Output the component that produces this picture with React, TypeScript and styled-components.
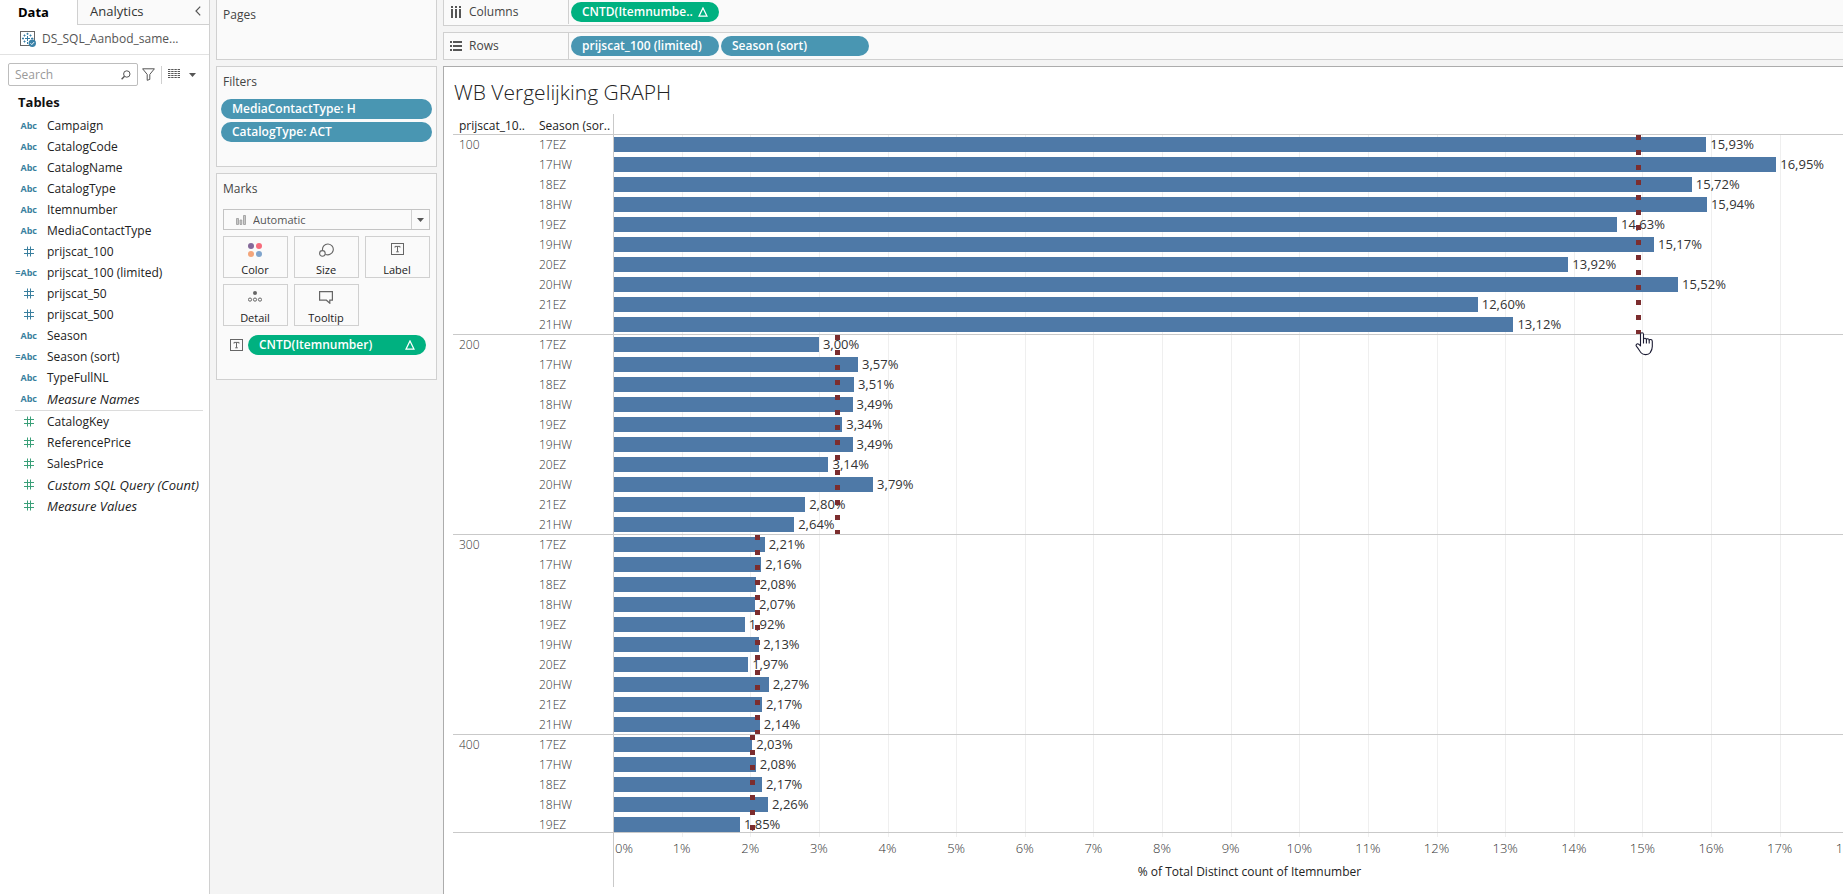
import React from "react";
import styled, { createGlobalStyle } from "styled-components";

/* ---------- data ---------- */

type FieldKind = "text" | "calc" | "number";
interface Field {
  name: string;
  kind: FieldKind;
  generated?: boolean;
}

const dimensions: Field[] = [
  { name: "Campaign", kind: "text" },
  { name: "CatalogCode", kind: "text" },
  { name: "CatalogName", kind: "text" },
  { name: "CatalogType", kind: "text" },
  { name: "Itemnumber", kind: "text" },
  { name: "MediaContactType", kind: "text" },
  { name: "prijscat_100", kind: "number" },
  { name: "prijscat_100 (limited)", kind: "calc" },
  { name: "prijscat_50", kind: "number" },
  { name: "prijscat_500", kind: "number" },
  { name: "Season", kind: "text" },
  { name: "Season (sort)", kind: "calc" },
  { name: "TypeFullNL", kind: "text" },
  { name: "Measure Names", kind: "text", generated: true },
];

const measures: Field[] = [
  { name: "CatalogKey", kind: "number" },
  { name: "ReferencePrice", kind: "number" },
  { name: "SalesPrice", kind: "number" },
  { name: "Custom SQL Query (Count)", kind: "number", generated: true },
  { name: "Measure Values", kind: "number", generated: true },
];

const seasons = ["17EZ", "17HW", "18EZ", "18HW", "19EZ", "19HW", "20EZ", "20HW", "21EZ", "21HW"];

interface Group {
  label: string;
  average: number;
  values: number[];
}

const groups: Group[] = [
  { label: "100", average: 14.94, values: [15.93, 16.95, 15.72, 15.94, 14.63, 15.17, 13.92, 15.52, 12.6, 13.12] },
  { label: "200", average: 3.27, values: [3.0, 3.57, 3.51, 3.49, 3.34, 3.49, 3.14, 3.79, 2.8, 2.64] },
  { label: "300", average: 2.1, values: [2.21, 2.16, 2.08, 2.07, 1.92, 2.13, 1.97, 2.27, 2.17, 2.14] },
  { label: "400", average: 2.02, values: [2.03, 2.08, 2.17, 2.26, 1.85] },
];

const AXIS_MAX = 18.52;
const ticks = Array.from({ length: 19 }, (_, i) => i);
/* Zero lies on the 1px axis line, just left of the plot's content box. */
const toPlot = (value: number) => `calc(${(value / AXIS_MAX) * 100}% - 1px)`;
const format = (value: number) => `${value.toFixed(2).replace(".", ",")}%`;

/* ---------- shared ---------- */

const color = {
  line: "#d0d0d0",
  card: "#fafafa",
  canvas: "#f4f4f4",
  dimension: "#4996b2",
  measure: "#00b180",
  bar: "#4e79a7",
  chartLine: "#c9c9c9",
};

const GlobalStyle = createGlobalStyle`
  *, *::before, *::after { box-sizing: border-box; }
  body {
    margin: 0;
    font: 12px/16px "Open Sans", "Noto Sans", sans-serif;
    color: #222;
    background: ${color.canvas};
    overflow: hidden;
  }
  button, input, select { font: inherit; color: inherit; }
  button { border: 0; padding: 0; background: none; cursor: pointer; }
  ul { margin: 0; padding: 0; list-style: none; }
  svg { display: block; flex: none; }
`;

const Page = styled.div`
  display: grid;
  grid-template-columns: 210px 221px minmax(0, 1fr);
  column-gap: 6px;
  min-height: 100vh;
`;

const Pill = styled.button<{ $tone: "dimension" | "measure" }>`
  display: flex;
  align-items: center;
  justify-content: space-between;
  height: 20px;
  padding: 0 11px;
  border-radius: 10px;
  background: ${(p) => color[p.$tone]};
  color: #fff;
  font-weight: 600;
  line-height: 20px;
  white-space: nowrap;
`;

/* ---------- data pane ---------- */

const DataPane = styled.aside`
  background: #fff;
  border-right: 1px solid ${color.line};
`;

const Tabs = styled.div`
  display: grid;
  grid-template-columns: 77px 1fr;
  height: 25px;
`;

const Tab = styled.button<{ $active?: boolean }>`
  display: flex;
  align-items: center;
  justify-content: space-between;
  padding: 0 8px 2px ${(p) => (p.$active ? 18 : 12)}px;
  font-size: 13px;
  font-weight: ${(p) => (p.$active ? 700 : 400)};
  color: ${(p) => (p.$active ? "#000" : "#333")};
  background: ${(p) => (p.$active ? "#fff" : color.card)};
  border: 0 solid ${color.line};
  border-width: ${(p) => (p.$active ? "0" : "0 0 1px 1px")};
`;

const Source = styled.button`
  display: flex;
  align-items: center;
  gap: 6px;
  width: 100%;
  height: 30px;
  padding: 0 20px 2px;
  color: #555;
  border-bottom: 1px solid #e2e2e2;
`;

const SearchRow = styled.div`
  display: flex;
  align-items: center;
  gap: 4px;
  padding: 8px 12px 0 8px;
`;

const SearchBox = styled.label`
  display: flex;
  align-items: center;
  width: 130px;
  height: 23px;
  padding: 0 6px;
  border: 1px solid #bdbdbd;
  border-radius: 2px;
`;

const SearchInput = styled.input`
  flex: 1;
  min-width: 0;
  padding: 0;
  border: 0;
  outline: 0;
  background: none;
  &::placeholder { color: #999; opacity: 1; }
`;

const ToolDivider = styled.span`
  width: 1px;
  height: 18px;
  margin: 0 2px;
  background: ${color.line};
`;

const ViewButton = styled.button`
  display: flex;
  align-items: center;
  gap: 9px;
`;

const TablesHeading = styled.h2`
  margin: 6px 0 3px;
  padding-left: 18px;
  font-size: 13px;
  line-height: 20px;
  font-weight: 700;
  color: #111;
`;

const FieldList = styled.ul`
  & + & {
    position: relative;
    margin-top: 1px;
    padding-top: 1px;
  }
  & + &::before {
    content: "";
    position: absolute;
    top: 0;
    left: 15px;
    right: 6px;
    height: 1px;
    background: #dcdcdc;
  }
`;

const FieldItem = styled.li<{ $generated?: boolean }>`
  display: grid;
  grid-template-columns: 38px 1fr;
  column-gap: 9px;
  align-items: center;
  height: 21px;
  white-space: nowrap;
  font-size: ${(p) => (p.$generated ? 13 : 12)}px;
  font-style: ${(p) => (p.$generated ? "italic" : "normal")};
`;

const FieldIcon = styled.span<{ $number: boolean; $measure: boolean }>`
  justify-self: end;
  padding-right: ${(p) => (p.$number ? 4 : 1)}px;
  font-size: 9px;
  font-style: normal;
  font-weight: 700;
  color: ${(p) => (p.$measure ? "#3a9f78" : "#3a7f9e")};
`;

/* ---------- cards ---------- */

const Cards = styled.section`
  display: flex;
  flex-direction: column;
  gap: 6px;
`;

const Card = styled.section<{ $cut?: boolean; $bottom: number }>`
  padding: 0 4px ${(p) => p.$bottom}px;
  background: ${color.card};
  border: 1px solid ${color.line};
  border-top-width: ${(p) => (p.$cut ? 0 : 1)}px;
`;

const CardTitle = styled.h2`
  margin: 0;
  padding-left: 2px;
  font-size: 12px;
  line-height: 29px;
  font-weight: 400;
  color: #444;
`;

const PillStack = styled.div`
  display: grid;
  gap: 3px;
  padding-top: 3px;
`;

const MarksBody = styled.div`
  display: grid;
  gap: 6px;
  padding: 6px 2px 0;
`;

const MarkType = styled.label`
  display: flex;
  align-items: center;
  height: 21px;
  border: 1px solid #c4c4c4;
  background: ${color.card};
  padding-left: 12px;
  gap: 7px;
`;

const MarkSelect = styled.select`
  appearance: none;
  flex: 1;
  align-self: stretch;
  padding: 0;
  border: 0;
  outline: 0;
  background: none;
  font-size: 11px;
  color: #555;
`;

const MarkArrow = styled.span`
  display: grid;
  place-items: center;
  align-self: stretch;
  width: 18px;
  margin-left: -7px;
  border-left: 1px solid ${color.line};
`;

const MarkGrid = styled.div`
  display: grid;
  grid-template-columns: repeat(3, 65px);
  gap: 6px;
`;

const MarkButton = styled.button`
  display: flex;
  flex-direction: column;
  align-items: center;
  justify-content: space-between;
  height: 42px;
  padding: 6px 1px 0 0;
  border: 1px solid ${color.line};
  font-size: 11px;
  line-height: 15px;
`;

const EncodedField = styled.div`
  display: grid;
  grid-template-columns: 13px 1fr;
  column-gap: 5px;
  align-items: center;
  padding: 3px 4px 0 7px;
`;

/* ---------- shelves and sheet ---------- */

const Workspace = styled.main`
  display: flex;
  flex-direction: column;
  gap: 6px;
  min-width: 0;
  overflow: hidden;
`;

const Shelf = styled.section<{ $cut?: boolean }>`
  display: flex;
  height: ${(p) => (p.$cut ? 26 : 28)}px;
  padding-bottom: ${(p) => (p.$cut ? 1 : 0)}px;
  background: ${color.card};
  border: 1px solid ${color.line};
  border-width: ${(p) => (p.$cut ? "0 0 1px 1px" : "1px 0 1px 1px")};
`;

const ShelfName = styled.h2`
  display: flex;
  align-items: center;
  gap: 7px;
  width: 125px;
  margin: 0;
  padding-left: 6px;
  font-size: 12px;
  font-weight: 400;
  color: #444;
  border-right: 1px solid ${color.line};
`;

const ShelfPills = styled.div`
  display: grid;
  grid-auto-flow: column;
  grid-auto-columns: 148px;
  align-items: center;
  gap: 2px;
  padding-left: 2px;
`;

const Sheet = styled.section`
  flex: 1;
  background: #fff;
  border: 1px solid #acacac;
  border-width: 1px 0 0 1px;
`;

const SheetTitle = styled.h1`
  margin: 0;
  padding: 10px 0 7px 10px;
  font-size: 21px;
  line-height: 30px;
  font-weight: 300;
  color: #222;
`;

const Chart = styled.div`
  width: calc(100% + 33px);
  margin-left: 9px;
`;

const chartColumns = "grid-template-columns: 80px 80px minmax(0, 1fr);";

const ChartHead = styled.div`
  display: grid;
  ${chartColumns}
  height: 20px;
  line-height: 24px;
  color: #222;
  white-space: nowrap;
`;

const HeadCell = styled.span`
  padding-left: 6px;
`;

const PlotEdge = styled.div`
  border-left: 1px solid ${color.chartLine};
`;

const ChartBody = styled.div`
  position: relative;
`;

const GridLayer = styled.div`
  position: absolute;
  inset: 0 0 -4px 161px;
`;

const GridLine = styled.span`
  position: absolute;
  top: 1px;
  bottom: 0;
  width: 1px;
  background: #efefef;
`;

const GroupRow = styled.section`
  position: relative;
  display: grid;
  ${chartColumns}
  border-top: 1px solid ${color.chartLine};
  &:last-child { border-bottom: 1px solid ${color.chartLine}; }
  &:last-child > * { padding-bottom: 0; }
`;

const LabelColumn = styled.div`
  display: flex;
  flex-direction: column;
  gap: 5px;
  padding: 2px 0 2px 6px;
  line-height: 15px;
  font-weight: 300;
  color: #333;
`;

const Plot = styled.div`
  position: relative;
  display: flex;
  flex-direction: column;
  gap: 5px;
  padding: 2px 0;
  border-left: 1px solid ${color.chartLine};
`;

const BarRow = styled.div`
  display: flex;
  gap: 4px;
  height: 15px;
  font-size: 13px;
  line-height: 15px;
  color: #333;
`;

const Bar = styled.div`
  flex: none;
  background: ${color.bar};
`;

const AverageLine = styled.div`
  position: absolute;
  top: 0;
  bottom: 0;
  width: 5px;
  margin-left: -2px;
  background: repeating-linear-gradient(#7c2d2e 0 5px, transparent 5px 15px);
`;

const Hand = styled.svg`
  position: absolute;
  z-index: 1;
  bottom: -22px;
  left: -1px;
`;

const Axis = styled.div`
  display: grid;
  grid-template-columns: 160px minmax(0, 1fr);
  height: 54px;
`;

const AxisPlot = styled.div`
  grid-column: 2;
  border-left: 1px solid ${color.chartLine};
  padding-top: 6px;
`;

const AxisTicks = styled.div`
  position: relative;
  height: 18px;
  font-size: 13px;
  font-weight: 300;
  line-height: 18px;
  color: #333;
`;

const Tick = styled.span<{ $first: boolean }>`
  position: absolute;
  transform: translateX(${(p) => (p.$first ? "2px" : "-50%")});
`;

const AxisTitle = styled.div`
  margin-top: 7px;
  line-height: 16px;
  text-align: center;
  color: #222;
`;

/* ---------- icons ---------- */

const HashIcon = () => (
  <svg width="10" height="11" viewBox="0 0 10 11" stroke="currentColor" fill="none">
    <path d="M3.5 .5v10M6.5 .5v10M0 3.5h10M0 7.5h10" />
  </svg>
);

const SourceIcon = () => (
  <svg width="16" height="16" viewBox="0 0 16 16" fill="none">
    <rect x=".5" y=".5" width="14" height="14" stroke="#666" />
    <path
      d="M7.5 5v5M5 7.5h5M7.5 1.8v2M6.5 2.8h2M7.5 11v2M2 7.5h2M3 6.5v2M11 7.5h2.4M12.2 6.5v2M3.5 4.5h2M4.5 3.5v2M9.5 4.5h2M10.5 3.5v2M3.5 10.5h2M4.5 9.5v2"
      stroke="#3a7fa5"
    />
    <circle cx="12.3" cy="12.3" r="3.7" fill="#3a82a8" />
    <path d="M10.5 12.3l1.3 1.3 2.3-2.5" stroke="#fff" />
  </svg>
);

const Magnifier = () => (
  <svg width="10" height="10" viewBox="0 0 10 10" fill="none" stroke="#555">
    <circle cx="5.8" cy="4" r="3.2" />
    <path d="M3.5 6.3L.6 9.2" strokeWidth="1.4" />
  </svg>
);

const Funnel = () => (
  <svg width="13" height="13" viewBox="0 0 13 13" fill="none" stroke="#555">
    <path d="M.6 .8h11.8L7.8 6.4v5l-2.6.9V6.4z" />
  </svg>
);

const ListIcon = () => (
  <svg width="12" height="11" viewBox="0 0 12 11" stroke="#555">
    <path d="M0 .5h12M0 2.5h12M0 4.5h12M0 6.5h12M0 8.5h12" strokeDasharray="2.4 .8" />
  </svg>
);

const Caret = () => (
  <svg width="7" height="4" viewBox="0 0 7 4" fill="#555">
    <path d="M0 0h7L3.5 4z" />
  </svg>
);

const ChevronIcon = () => (
  <svg width="6" height="10" viewBox="0 0 6 10" fill="none" stroke="#555" strokeWidth="1.2">
    <path d="M5.2 .7L1 5l4.2 4.3" />
  </svg>
);

const Delta = () => (
  <svg width="10" height="10" viewBox="0 0 10 10" fill="none" stroke="#fff" strokeWidth="1.2">
    <path d="M5 .9L9 9.2H1z" />
  </svg>
);

const MiniBars = () => (
  <svg width="10" height="10" viewBox="0 0 10 10" fill="#c8c8c8" stroke="#999" strokeWidth=".8">
    <path d="M.5 3.5h2v6h-2zM4 5h1.8v4.5H4zM7.500 .5h2v9h-2z" />
  </svg>
);

const LabelIcon = () => (
  <svg width="13" height="12" viewBox="0 0 13 12" fill="none" stroke="#666">
    <rect x=".5" y=".5" width="12" height="11" />
    <path d="M4 4.6V3.4h5v1.2M6.5 3.4v5.4M5.2 8.8h2.6" />
  </svg>
);

const ColorIcon = () => (
  <svg width="14" height="14" viewBox="0 0 14 14">
    <circle cx="3" cy="3" r="3" fill="#84699a" />
    <circle cx="11" cy="3" r="3" fill="#f76c7c" />
    <circle cx="3" cy="11" r="3" fill="#f3a57b" />
    <circle cx="11" cy="11" r="3" fill="#7fa4cc" />
  </svg>
);

const SizeIcon = () => (
  <svg width="15" height="14" viewBox="0 0 15 14" fill="none" stroke="#666">
    <path d="M3.600 7.500A5.400 5.400 0 1 1 6.400 11.200" strokeWidth="1.1" />
    <circle cx="3.4" cy="10.400" r="2.800" strokeWidth="1.1" />
  </svg>
);

const DetailIcon = () => (
  <svg width="14" height="11" viewBox="0 0 14 11" fill="none" stroke="#666">
    <circle cx="7" cy="2" r="2" fill="#666" stroke="none" />
    <circle cx="2" cy="8.6" r="1.6" />
    <circle cx="7" cy="8.6" r="1.6" />
    <circle cx="12" cy="8.6" r="1.6" />
  </svg>
);

const TooltipIcon = () => (
  <svg width="14" height="13" viewBox="0 0 14 13" fill="none" stroke="#666" strokeWidth="1.2">
    <path d="M.6 .6h12.8v8.6h-2.6v3L7.4 9.2H.6z" />
  </svg>
);

const ColumnsIcon = () => (
  <svg width="12" height="12" viewBox="0 0 12 12" fill="#555">
    <path d="M1 0h2v2H1zM5 0h2v2H5zM9 0h2v2H9zM1 3h2v9H1zM5 3h2v9H5zM9 3h2v9H9z" />
  </svg>
);

const RowsIcon = () => (
  <svg width="12" height="11" viewBox="0 0 12 11" fill="#555">
    <path d="M0 0h2v2H0zM3 0h9v2H3zM0 4h2v2H0zM3 4h9v2H3zM0 8h2v2H0zM3 8h9v2H3z" />
  </svg>
);

const HandCursor = () => (
  <Hand width="19" height="24" viewBox="0 0 19 24" fill="#fff" stroke="#1b1b33" strokeWidth="1.1" strokeLinejoin="round">
    <path d="M5.5 2.4c0-2.2 3-2.2 3 0v5c.3-1.6 2.8-1.4 2.9.2.4-1.4 2.7-1.1 2.8.6.6-1.2 3.1-.9 3.1 1.2v5c0 3.2-1 4.6-2.2 6.4-1.6 2.2-6.8 2.6-8.8.2-1.6-1.8-2.6-4.2-4.6-6.4-1.6-1.8.4-3.6 2-2.4l1.8 1.6z" />
    <path d="M8.5 7.2v4.3M11.4 7.6v3.9M14.2 8.3v3.2" fill="none" />
  </Hand>
);

/* ---------- components ---------- */

function Fields({ items, measure = false }: { items: Field[]; measure?: boolean }) {
  return (
    <FieldList>
      {items.map((field) => (
        <FieldItem key={field.name} $generated={field.generated}>
          <FieldIcon $number={field.kind === "number"} $measure={measure}>
            {field.kind === "number" ? <HashIcon /> : field.kind === "calc" ? "=Abc" : "Abc"}
          </FieldIcon>
          {field.name}
        </FieldItem>
      ))}
    </FieldList>
  );
}

function ChartGroup({ group, pointed }: { group: Group; pointed: boolean }) {
  return (
    <GroupRow>
      <LabelColumn>{group.label}</LabelColumn>
      <LabelColumn>
        {group.values.map((_, i) => (
          <span key={seasons[i]}>{seasons[i]}</span>
        ))}
      </LabelColumn>
      <Plot>
        {group.values.map((value, i) => (
          <BarRow key={seasons[i]}>
            <Bar style={{ width: toPlot(value) }} />
            {format(value)}
          </BarRow>
        ))}
        <AverageLine style={{ left: toPlot(group.average) }}>{pointed && <HandCursor />}</AverageLine>
      </Plot>
    </GroupRow>
  );
}

export default function App() {
  return (
    <Page>
      <GlobalStyle />
      <DataPane>
        <Tabs>
          <Tab $active>Data</Tab>
          <Tab>
            Analytics
            <ChevronIcon />
          </Tab>
        </Tabs>
        <Source>
          <SourceIcon />
          DS_SQL_Aanbod_same...
        </Source>
        <SearchRow>
          <SearchBox>
            <SearchInput type="text" placeholder="Search" aria-label="Search" />
            <Magnifier />
          </SearchBox>
          <button aria-label="Filter fields">
            <Funnel />
          </button>
          <ToolDivider />
          <ViewButton aria-label="View options">
            <ListIcon />
            <Caret />
          </ViewButton>
        </SearchRow>
        <TablesHeading>Tables</TablesHeading>
        <Fields items={dimensions} />
        <Fields items={measures} measure />
      </DataPane>

      <Cards>
        <Card $cut $bottom={30}>
          <CardTitle>Pages</CardTitle>
        </Card>
        <Card $bottom={24}>
          <CardTitle>Filters</CardTitle>
          <PillStack>
            <Pill $tone="dimension">MediaContactType: H</Pill>
            <Pill $tone="dimension">CatalogType: ACT</Pill>
          </PillStack>
        </Card>
        <Card $bottom={24}>
          <CardTitle>Marks</CardTitle>
          <MarksBody>
            <MarkType>
              <MiniBars />
              <MarkSelect aria-label="Mark type">
                <option>Automatic</option>
              </MarkSelect>
              <MarkArrow>
                <Caret />
              </MarkArrow>
            </MarkType>
            <MarkGrid>
              <MarkButton>
                <ColorIcon />
                Color
              </MarkButton>
              <MarkButton>
                <SizeIcon />
                Size
              </MarkButton>
              <MarkButton>
                <LabelIcon />
                Label
              </MarkButton>
              <MarkButton>
                <DetailIcon />
                Detail
              </MarkButton>
              <MarkButton>
                <TooltipIcon />
                Tooltip
              </MarkButton>
            </MarkGrid>
            <EncodedField>
              <LabelIcon />
              <Pill $tone="measure">
                CNTD(Itemnumber)
                <Delta />
              </Pill>
            </EncodedField>
          </MarksBody>
        </Card>
      </Cards>

      <Workspace>
        <Shelf $cut>
          <ShelfName>
            <ColumnsIcon />
            Columns
          </ShelfName>
          <ShelfPills>
            <Pill $tone="measure">
              CNTD(Itemnumbe..
              <Delta />
            </Pill>
          </ShelfPills>
        </Shelf>
        <Shelf>
          <ShelfName>
            <RowsIcon />
            Rows
          </ShelfName>
          <ShelfPills>
            <Pill $tone="dimension">prijscat_100 (limited)</Pill>
            <Pill $tone="dimension">Season (sort)</Pill>
          </ShelfPills>
        </Shelf>
        <Sheet>
          <SheetTitle>WB Vergelijking GRAPH</SheetTitle>
          <Chart>
            <ChartHead>
              <HeadCell>prijscat_10..</HeadCell>
              <HeadCell>Season (sor..</HeadCell>
              <PlotEdge />
            </ChartHead>
            <ChartBody>
              <GridLayer>
                {ticks.slice(1).map((tick) => (
                  <GridLine key={tick} style={{ left: toPlot(tick) }} />
                ))}
              </GridLayer>
              {groups.map((group, i) => (
                <ChartGroup key={group.label} group={group} pointed={i === 0} />
              ))}
            </ChartBody>
            <Axis>
              <AxisPlot>
                <AxisTicks>
                  {ticks.map((tick) => (
                    <Tick key={tick} $first={tick === 0} style={{ left: toPlot(tick) }}>
                      {tick}%
                    </Tick>
                  ))}
                </AxisTicks>
                <AxisTitle>% of Total Distinct count of Itemnumber</AxisTitle>
              </AxisPlot>
            </Axis>
          </Chart>
        </Sheet>
      </Workspace>
    </Page>
  );
}
